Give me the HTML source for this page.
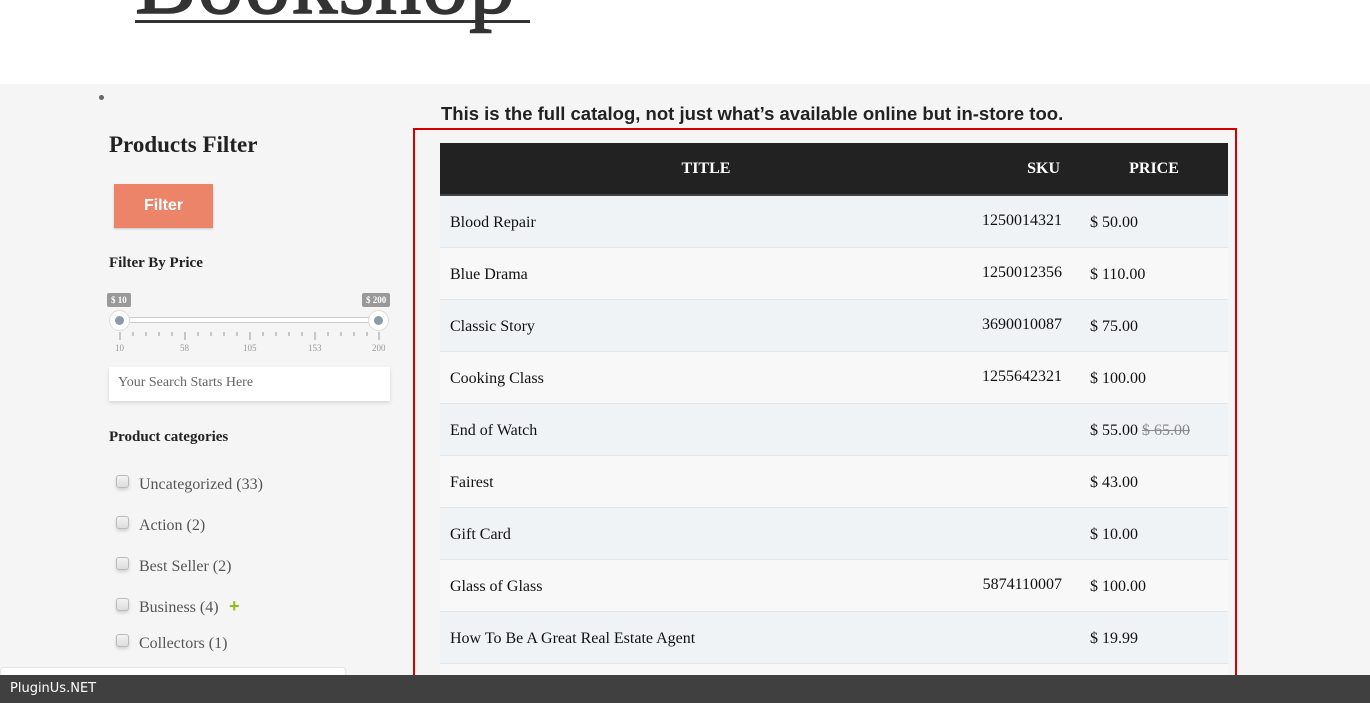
<!DOCTYPE html>
<html><head><meta charset="utf-8"><style>
*{margin:0;padding:0;box-sizing:border-box}
html{width:1370px;height:703px;overflow:hidden}
body{width:1370px;height:703px;overflow:hidden;background:#f5f5f5;font-family:"Liberation Serif",serif;position:relative}
.hdr{position:absolute;left:0;top:0;width:1370px;height:84px;background:#fff;overflow:hidden}
.logo{position:absolute;left:135px;top:-64px;font-size:92px;color:#333;font-family:"Liberation Serif",serif;letter-spacing:1px;line-height:1;-webkit-text-stroke:1.5px #333}
.uline{position:absolute;left:135px;top:20px;width:395px;height:3px;background:#333}
.abs{position:absolute}
h2{position:absolute;left:109px;top:132px;font-size:23px;color:#222;font-weight:bold}
.btn{position:absolute;left:114px;top:184px;width:99px;height:44px;background:#ec846a;color:#fff;font-family:"Liberation Sans",sans-serif;font-weight:bold;font-size:16px;text-align:center;line-height:44px;box-shadow:0 1px 2px rgba(0,0,0,.2)}
.h4{position:absolute;left:109px;font-size:15px;font-weight:bold;color:#222}
.tag{position:absolute;top:293px;height:14px;background:#999;color:#fff;font-size:9px;line-height:14px;padding:0 4px;border-radius:2px;font-weight:bold}
.search{position:absolute;left:109px;top:367px;width:281px;height:34px;background:#fff;box-shadow:0 2px 4px rgba(0,0,0,.12);font-size:14px;color:#666;padding:8px 9px}
.cat{position:absolute;left:139px;font-size:16px;color:#555}
.cb{position:absolute;left:116px;width:13px;height:13px;border:1px solid #bbb;border-radius:3px;background:linear-gradient(#f3f3f3,#ddd);box-shadow:0 2px 3px rgba(0,0,0,.15)}
.title{position:absolute;left:441px;top:103px;font-family:"Liberation Sans",sans-serif;font-weight:bold;font-size:18.5px;color:#222}
.frame{position:absolute;left:413px;top:128px;width:824px;height:547px;border:2px solid #d40000;border-bottom:none}
.tw{position:absolute;left:440px;top:143px;width:788px;height:532px;overflow:hidden}
table{width:788px;border-collapse:collapse;font-size:16px;color:#111}
th{background:#222;color:#fff;height:52px;font-size:16px;border-bottom:2px solid #444}
td{height:52px;border-bottom:1px solid #e6e6e6;padding-top:3px}
tr:nth-child(even) td{background:#eff3f6}
tr:nth-child(odd) td{background:#f8f8f8}
td.t{padding-left:10px}
td.s{text-align:right;padding-right:18px;vertical-align:top;padding-top:16px}
td.p{padding-left:10px}
.foot{position:absolute;left:0;top:675px;width:1370px;height:28px;background:#404040;color:#fff;font-family:"DejaVu Sans",sans-serif;font-size:13px;line-height:28px;padding-left:10px}
</style></head><body>
<div class="hdr"><div class="logo">Bookshop</div><div class="uline"></div></div>
<div class="abs" style="left:99px;top:95px;width:5px;height:5px;border-radius:50%;background:#666"></div>
<h2>Products Filter</h2>
<div class="btn">Filter</div>
<div class="h4" style="top:255px">Filter By Price</div>
<div class="tag" style="left:107px">$ 10</div>
<div class="tag" style="left:362px">$ 200</div>
<div class="abs" style="left:118px;top:317px;width:262px;height:6px;border:1px solid #ccc;background:#fff"></div>
<div class="abs" style="left:109px;top:310px;width:21px;height:21px;border-radius:50%;background:#fff;border:1px solid #ddd"></div>
<div class="abs" style="left:115px;top:316px;width:9px;height:9px;border-radius:50%;background:#8a9aa8"></div>
<div class="abs" style="left:368px;top:310px;width:21px;height:21px;border-radius:50%;background:#fff;border:1px solid #ddd"></div>
<div class="abs" style="left:374px;top:316px;width:9px;height:9px;border-radius:50%;background:#8a9aa8"></div>
<svg class="abs" style="left:118px;top:332px" width="264" height="10"><g stroke="#999"><path d="M2 0v8M67 0v8M132 0v8M197 0v8M261 0v8"/><path d="M15 0v4M28 0v4M41 0v4M54 0v4M80 0v4M93 0v4M106 0v4M119 0v4M145 0v4M158 0v4M171 0v4M184 0v4M210 0v4M223 0v4M236 0v4M249 0v4"/></g></svg>
<div class="abs" style="left:115px;top:343px;font-size:9px;color:#999">10</div>
<div class="abs" style="left:180px;top:343px;font-size:9px;color:#999">58</div>
<div class="abs" style="left:243px;top:343px;font-size:9px;color:#999">105</div>
<div class="abs" style="left:308px;top:343px;font-size:9px;color:#999">153</div>
<div class="abs" style="left:372px;top:343px;font-size:9px;color:#999">200</div>
<div class="search">Your Search Starts Here</div>
<div class="h4" style="top:429px">Product categories</div>
<div class="cb" style="top:475px"></div><div class="cat" style="top:476px">Uncategorized (33)</div>
<div class="cb" style="top:516px"></div><div class="cat" style="top:517px">Action (2)</div>
<div class="cb" style="top:557px"></div><div class="cat" style="top:558px">Best Seller (2)</div>
<div class="cb" style="top:598px"></div><div class="cat" style="top:599px">Business (4)</div>
<div class="abs" style="left:229px;top:597px;color:#8cc21a;font-weight:bold;font-size:18px;font-family:'Liberation Sans',sans-serif;line-height:18px">+</div>
<div class="cb" style="top:634px"></div><div class="cat" style="top:635px">Collectors (1)</div>
<div class="abs" style="left:0;top:667px;width:346px;height:10px;background:#fff;border:1px solid #e5e5e5;border-radius:4px"></div>
<div class="title">This is the full catalog, not just what’s available online but in-store too.</div>
<div class="frame"></div>
<div class="tw"><table>
<tr><th style="width:532px">TITLE</th><th style="width:108px;text-align:right;padding-right:20px">SKU</th><th>PRICE</th></tr>
<tr><td class="t">Blood Repair</td><td class="s">1250014321</td><td class="p">$ 50.00</td></tr>
<tr><td class="t">Blue Drama</td><td class="s">1250012356</td><td class="p">$ 110.00</td></tr>
<tr><td class="t">Classic Story</td><td class="s">3690010087</td><td class="p">$ 75.00</td></tr>
<tr><td class="t">Cooking Class</td><td class="s">1255642321</td><td class="p">$ 100.00</td></tr>
<tr><td class="t">End of Watch</td><td class="s"></td><td class="p">$ 55.00 <s style="color:#888">$ 65.00</s></td></tr>
<tr><td class="t">Fairest</td><td class="s"></td><td class="p">$ 43.00</td></tr>
<tr><td class="t">Gift Card</td><td class="s"></td><td class="p">$ 10.00</td></tr>
<tr><td class="t">Glass of Glass</td><td class="s">5874110007</td><td class="p">$ 100.00</td></tr>
<tr><td class="t">How To Be A Great Real Estate Agent</td><td class="s"></td><td class="p">$ 19.99</td></tr>
<tr><td class="t"></td><td class="s"></td><td class="p"></td></tr>
</table></div>
<div class="foot">PluginUs.NET</div>
</body></html>
